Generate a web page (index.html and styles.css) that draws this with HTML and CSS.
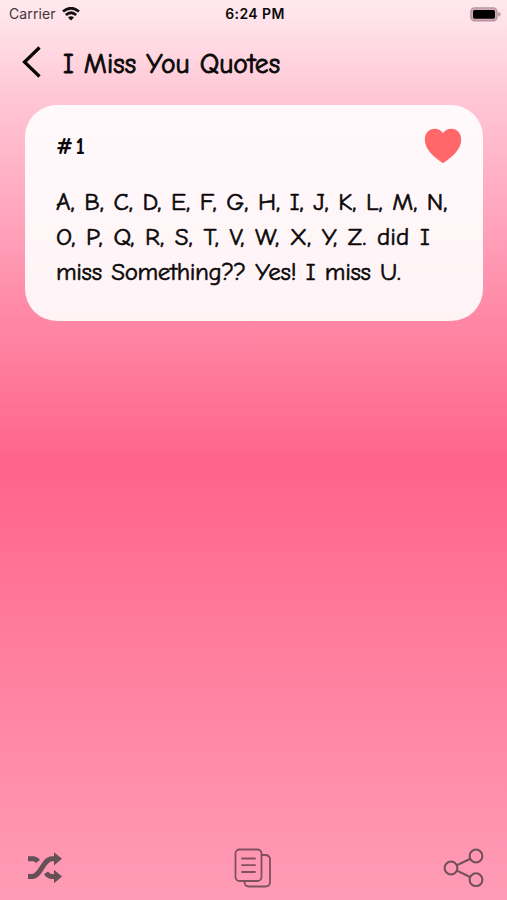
FILE: index.html
```html
<!DOCTYPE html>
<html lang="en">
<head>
<meta charset="utf-8">
<title>I Miss You Quotes</title>
<link rel="stylesheet" href="styles.css">
</head>
<body>
<div class="screen">
  <div class="status">
    <div class="carrier"><span>Carrier</span>
      <svg class="wifi" width="18" height="14" viewBox="0 0 18 14" fill="none" stroke="#151013" stroke-width="2.8"><path d="M1 4.5Q9-2 17 4.5M3.8 8Q9 3.6 14.2 8"/><path d="M6 10.5Q9 8 12 10.5L9 13.4Z" fill="#151013" stroke="none"/></svg>
    </div>
    <span class="time">6:24 PM</span>
    <svg class="battery" width="31" height="15" viewBox="0 0 31 15"><rect x=".9" y=".9" width="26" height="12.8" rx="3.6" fill="#d5a9b5" stroke="#b5959f" stroke-width="1.4"/><rect x="3" y="3" width="22" height="8.7" rx="1.6"/><path d="M28.2 5Q30.6 5.6 30.6 7.3T28.2 9.7Z" fill="#b5959f"/></svg>
  </div>
  <header class="header">
    <svg width="20" height="34" viewBox="0 0 20 34" fill="none" stroke="#080506" stroke-width="3.2"><path d="M17.5 2.5L2.5 17L17.5 31.5"/></svg>
    <h1 class="title">I Miss You Quotes</h1>
  </header>
  <article class="card">
    <div class="card-head">
      <h2 class="number">#1</h2>
      <svg class="heart" width="38" height="36" viewBox="0 0 38 36"><path d="M19 35.2C12 30.5.8 22.5.8 11.5C.8 5 5.2.7 10.6.7C14.4.7 17.5 2.5 19 5.2C20.5 2.5 23.6.7 27.4.7C32.8.7 37.2 5 37.2 11.5C37.2 22.5 26 30.5 19 35.2Z" fill="#ff6769"/></svg>
    </div>
    <p class="quote">
      <span class="line line-a">A, B, C, D, E, F, G, H, I, J, K, L, M, N,</span>
      <span class="line line-b">O, P, Q, R, S, T, V, W, X, Y, Z. did I</span>
      <span class="line line-c">miss Something?? Yes! I miss U.</span>
    </p>
  </article>
  <footer class="actions">
    <svg width="36" height="32" viewBox="0 0 36 32"><path d="M1 6.8H6Q9 6.8 11 9.4M1 24.5H5C14 24.5 16 6.8 25 6.8H28M19 20.8Q21.5 24.5 25 24.5H28" fill="none" stroke="#655057" stroke-width="5"/><path d="M27 .3L35 6.8L27 13.5ZM27 17.8L35 24.5L27 31.2Z" fill="#655057"/></svg>
    <svg width="38" height="40" viewBox="0 0 38 40" fill="none" stroke="#80505f" stroke-width="1.8" stroke-linecap="round"><rect x="1.5" y="1.5" width="26" height="31.5" rx="4"/><path d="M28 7H31Q36 7 36 12V34Q36 38.5 31.5 38.5H15Q10.5 38.5 10.5 34V33M8 10.5H21M8 17.2H21M8 24H21"/></svg>
    <svg width="42" height="40" viewBox="0 0 42 40" fill="none" stroke="#705058" stroke-width="2"><circle cx="8" cy="20" r="6.4"/><circle cx="33" cy="8" r="6.4"/><circle cx="33" cy="31.7" r="6.4"/><path d="M14 17.2L27 11M14 22.7L27 29"/></svg>
  </footer>
</div>
</body>
</html>
```
FILE: styles.css
```css
* { box-sizing: border-box; }
body { margin: 0; }
h1, h2, p { margin: 0; }
svg { display: block; flex: none; }
.screen {
  width: 507px;
  height: 900px;
  overflow: hidden;
  display: flex;
  flex-direction: column;
  color: #0b0809;
  font-family: "Comic Neue", "Chalkboard SE", Lato, sans-serif;
  background: linear-gradient(#ffe9ee 0, #ffdce5 40px, #ffc9d7 90px, #ffa9c0 200px, #ff87a5 320px, #ff6389 465px, #ff7899 610px, #ff8eab 780px, #ff9cb5 900px);
}
.status {
  height: 28px;
  padding: 0 6px 0 9px;
  display: grid;
  grid-template-columns: 1fr auto 1fr;
  align-items: center;
  font: 14px/28px Inter, sans-serif;
}
.carrier { display: flex; align-items: center; gap: 6px; color: #40353a; letter-spacing: .1px; }
.time { font-weight: 600; font-size: 14px; letter-spacing: .4px; }
.battery { justify-self: end; }
.header { height: 77px; padding: 17px 0 0 22px; display: flex; align-items: flex-start; gap: 21px; }
.title { font-size: 27.5px; line-height: 39px; font-weight: 400; white-space: nowrap; letter-spacing: .05px; word-spacing: .8px; -webkit-text-stroke: .9px #0b0809; }
.card {
  margin: 0 24px 0 25px;
  height: 216px;
  padding: 23px 21px 0 31px;
  border-radius: 32px;
  background: rgba(255, 255, 255, .9);
}
.card-head { height: 56px; display: flex; justify-content: space-between; }
.number { font-size: 24px; line-height: 37px; font-weight: 700; letter-spacing: 2.5px; }
.quote { font-size: 25px; line-height: 35px; font-weight: 400; -webkit-text-stroke: .6px #0b0809; }
.line { display: block; white-space: nowrap; }
.line-a { word-spacing: 1.25px; }
.line-b { word-spacing: 2.4px; }
.line-c { word-spacing: 1.6px; letter-spacing: -.37px; }
.actions { margin-top: auto; height: 64px; padding: 0 22px 0 27px; display: flex; justify-content: space-between; align-items: center; }
```
